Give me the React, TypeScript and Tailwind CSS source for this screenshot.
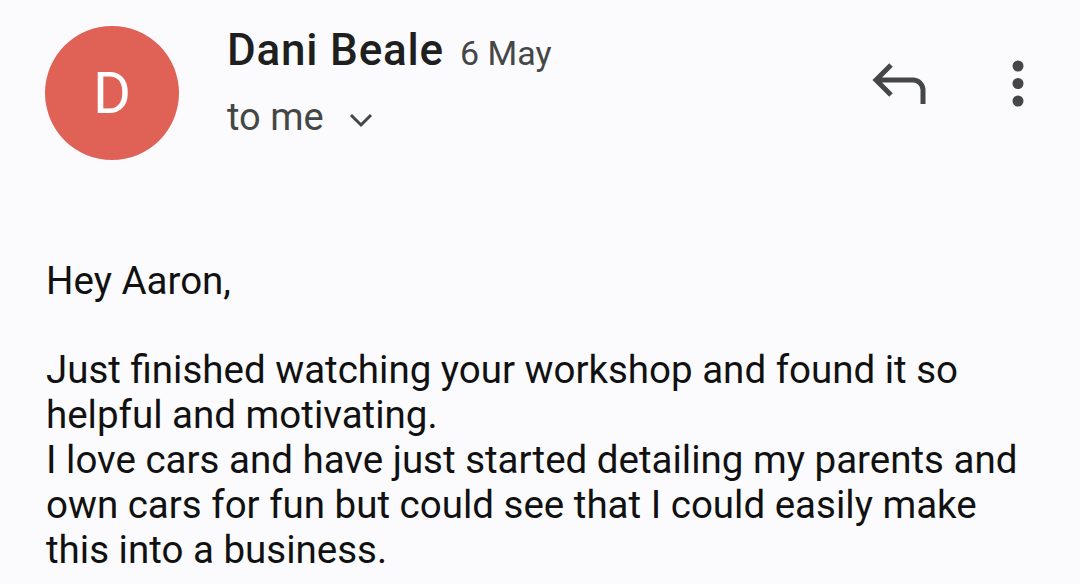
import React from 'react';

const ReplyIcon = () => (
    <svg width="60" height="50" viewBox="0 0 60 50" fill="none" stroke="#444746" strokeWidth="5">
        <path d="M22 10 L7 25 L22 40 M7 25 H44 a10 10 0 0 1 10 10 V49" />
    </svg>
);

const MoreIcon = () => (
    <svg width="14" height="50" viewBox="0 0 14 50" fill="#444746">
        <circle cx="7" cy="8" r="5.5" />
        <circle cx="7" cy="25.5" r="5.5" />
        <circle cx="7" cy="43" r="5.5" />
    </svg>
);

const App: React.FC = () => {
    return (
        <div
            className="w-[1080px] h-[584px] overflow-hidden bg-[#fbfbfe] text-[#1f1f1f]"
            style={{ fontFamily: 'Roboto, "Liberation Sans", sans-serif' }}
        >
            {/* header */}
            <div className="flex items-start pt-[26px] pl-[45px] pr-[55px]">
                <div className="w-[134px] h-[134px] rounded-full bg-[#e06156] flex items-center justify-center text-white text-[58px] leading-none">
                    D
                </div>
                <div className="ml-[48px] flex-1">
                    <div className="flex items-baseline gap-[16px] h-[48px]">
                        <span className="text-[44px] leading-[48px] font-medium tracking-[0.8px] text-[#1f1f1f]">Dani Beale</span>
                        <span className="text-[34px] leading-[48px] text-[#444746]">6 May</span>
                    </div>
                    <div className="flex items-center mt-[23px] h-[40px]">
                        <span className="text-[38px] leading-[40px] text-[#444746]">to me</span>
                        <svg className="ml-[24px] mt-[6px]" width="26" height="16" viewBox="0 0 26 16" fill="none" stroke="#444746" strokeWidth="3">
                            <path d="M3 3 L13 13 L23 3" />
                        </svg>
                    </div>
                </div>
                <div className="flex items-start gap-[82px]">
                    <div className="mt-[29px]">
                        <ReplyIcon />
                    </div>
                    <div className="mt-[32px]">
                        <MoreIcon />
                    </div>
                </div>
            </div>

            {/* body */}
            <div className="mt-[98px] pl-[46px] pr-[40px] text-[38.5px] text-[#111111]">
                <p className="leading-[45px]">Hey Aaron,</p>
                <p className="h-[44px]"></p>
                <p className="leading-[45px]">
                    Just finished watching your workshop and found it so helpful and motivating.
                    <br />
                    I love cars and have just started detailing my parents and own cars for fun but could see that I could easily make this into a business.
                </p>
            </div>
        </div>
    );
};

export default App;
